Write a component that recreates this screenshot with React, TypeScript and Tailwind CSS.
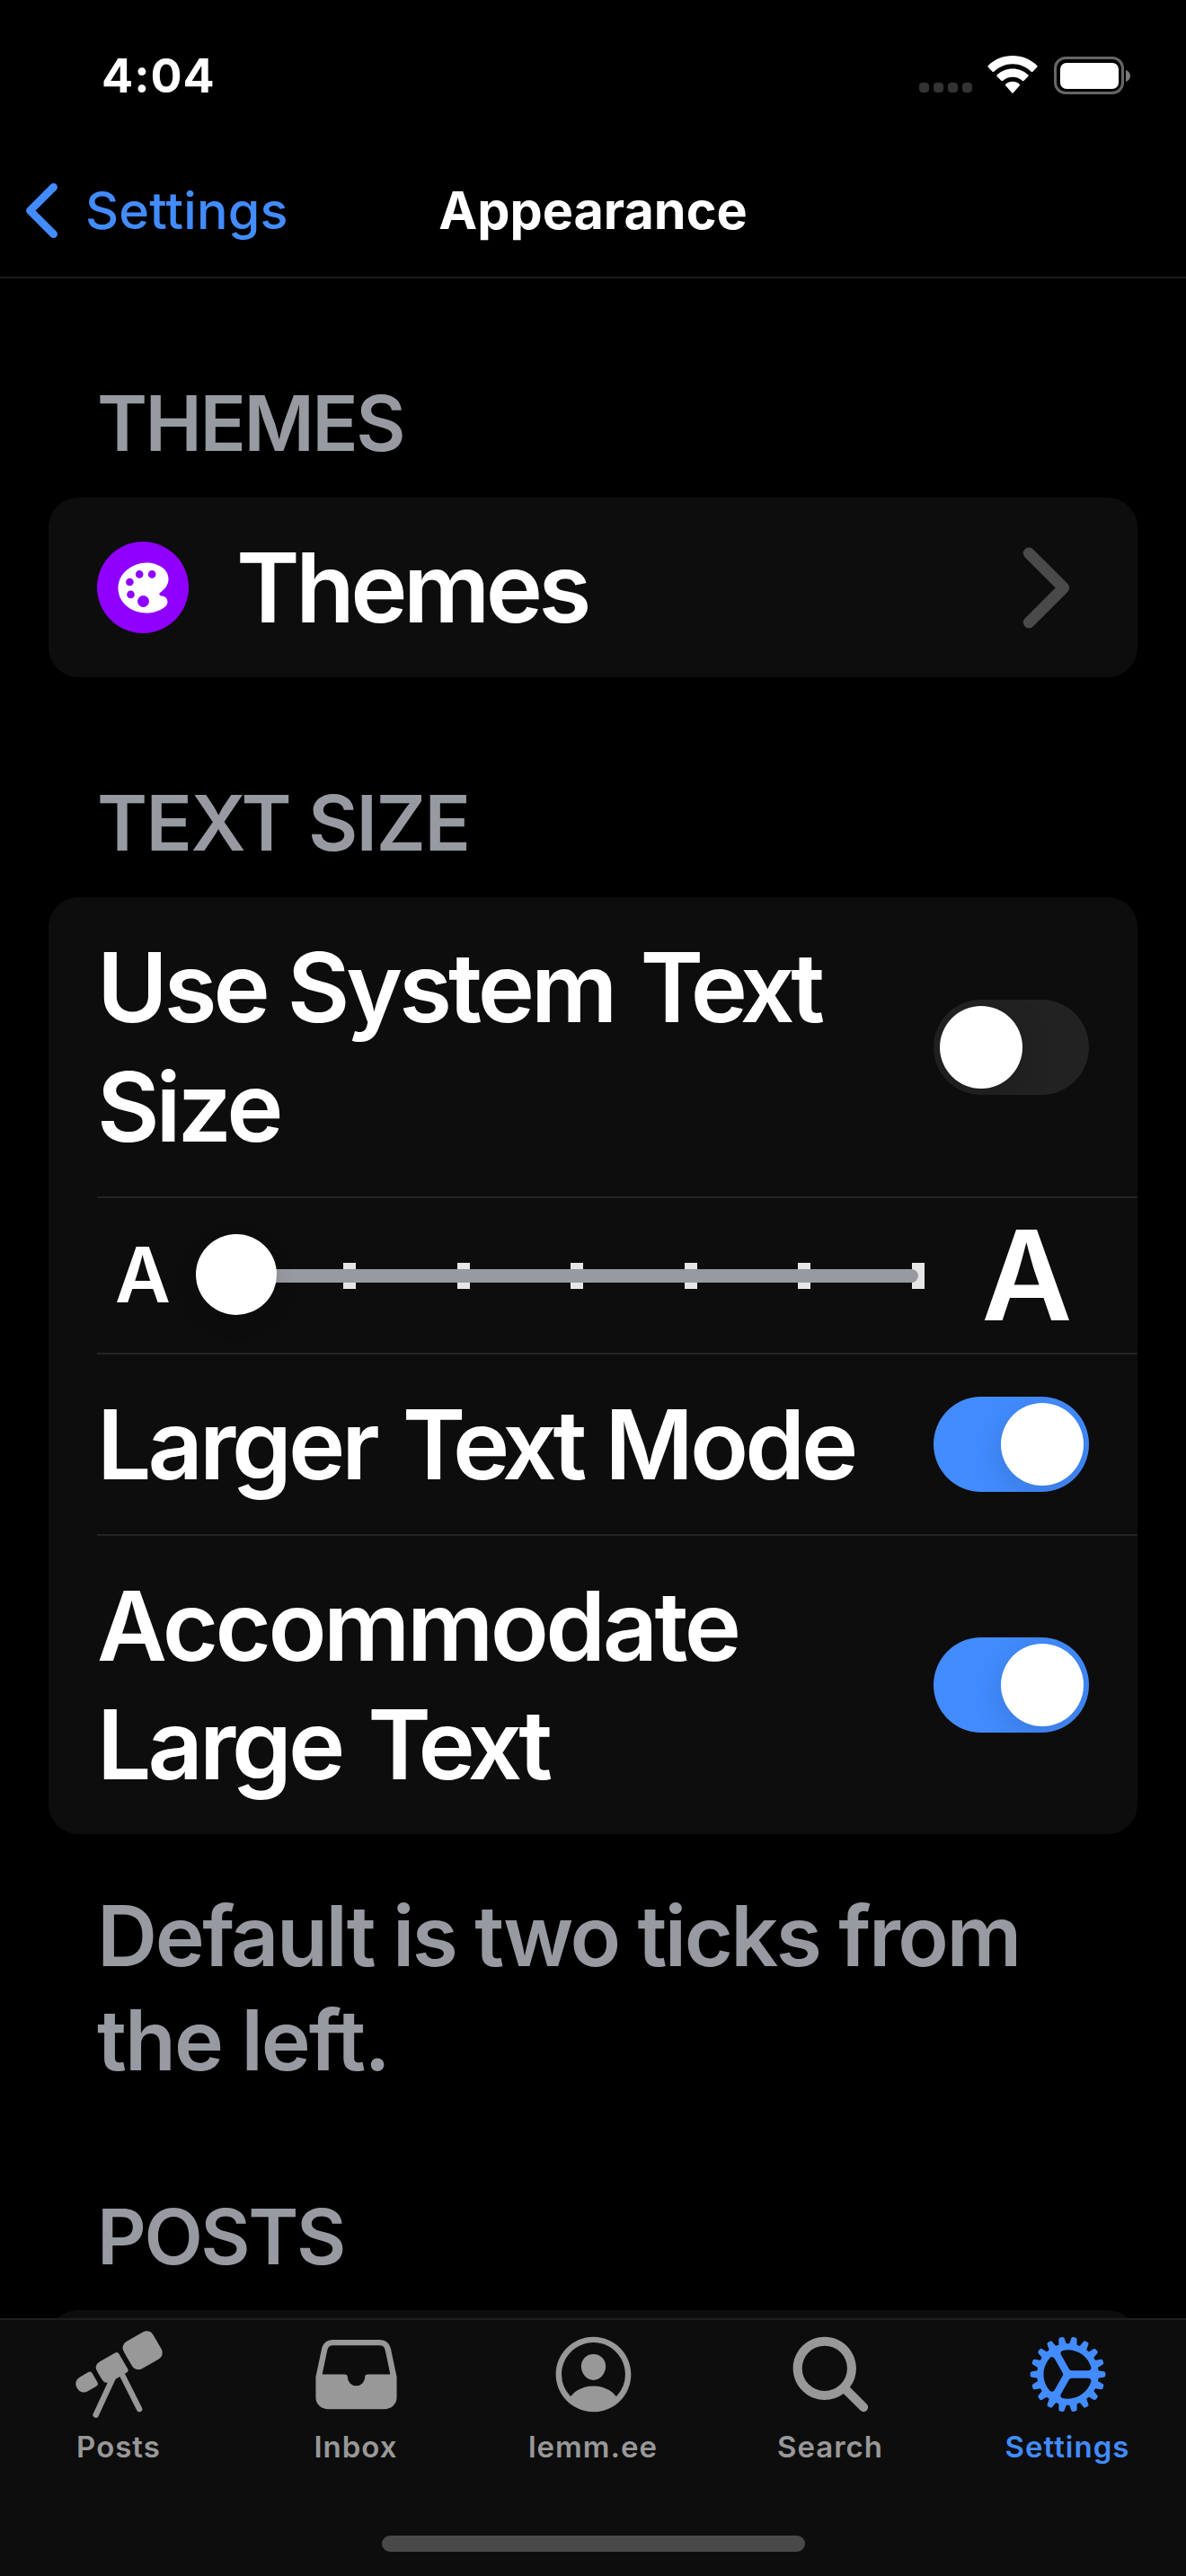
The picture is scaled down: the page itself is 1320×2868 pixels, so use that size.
import React from "react";
import {
  IoChevronBack,
  IoChevronForward,
  IoCog,
  IoColorPalette,
  IoFileTray,
  IoPersonCircleOutline,
  IoSearch,
  IoTelescope,
} from "react-icons/io5";

function StatusBar() {
  return (
    <div className="flex h-[160px] shrink-0 items-start justify-between pl-[113px] pr-[62px]">
      <div className="mt-[52px] text-[52px] leading-[65px] font-bold tracking-[1px]">4:04</div>
      <div className="mt-[62px] flex items-start">
        <div className="mt-[30px] flex gap-[5px]">
          {[0, 1, 2, 3].map((i) => (
            <div key={i} className="size-[11px] rounded-[4px] bg-[#333333]" />
          ))}
        </div>
        <svg className="ml-[17px] h-[42px] w-[56px]" viewBox="0 0 56 42" fill="#fff">
          <path d="M28 0c10.400 0 19.800 4 27 10.700 .7 .7 .7 1.600 0 2.300l-4.300 4.500c-.7 .7-1.500 .7-2.200 0C43 12.300 35.900 9.200 28 9.200S13 12.300 7.500 17.500c-.7 .7-1.500 .7-2.200 0L1 13c-.7-.7-.7-1.600 0-2.300C8.200 4 17.600 0 28 0z" />
          <path d="M28 14.400c6.600 0 12.500 2.500 17.100 6.600 .7 .7 .7 1.500 0 2.200l-4.400 4.500c-.6 .6-1.400 .6-2.100 0-2.800-2.500-6.500-4-10.600-4s-7.800 1.500-10.600 4c-.7 .6-1.500 .6-2.100 0l-4.400-4.500c-.7-.7-.7-1.500 0-2.200 4.600-4.100 10.500-6.600 17.100-6.600z" />
          <path d="M28 28.700c2.900 0 5.500 1 7.500 2.800 .7 .6 .7 1.500 .1 2.100l-6.500 7.500c-.7 .7-1.500 .7-2.200 0l-6.500-7.500c-.6-.6-.6-1.500 .1-2.100 2-1.800 4.600-2.800 7.500-2.800z" />
        </svg>
        <div className="ml-[18px] mt-px flex h-[42px] w-[78px] rounded-[13px] border-[3px] border-[#666666] p-[3.500px]">
          <div className="flex-1 rounded-[7px] bg-white" />
        </div>
        <svg className="ml-[2px] mt-[16px] h-[13px] w-[5px]" viewBox="0 0 5 13" fill="#7a7a7a">
          <path d="M0 0c3 1 5 3.600 5 6.500S3 12 0 13z" />
        </svg>
      </div>
    </div>
  );
}

function NavBar() {
  return (
    <div className="grid h-[150px] shrink-0 grid-cols-[1fr_auto_1fr] items-center border-b-2 border-[#1c1c1c] text-[57.500px] leading-[72px]">
      <div className="flex items-center text-[#428cff]">
        <IoChevronBack className="size-[93px]" />
        <span className="ml-[2px] font-medium tracking-[0.2px]">Settings</span>
      </div>
      <div className="font-bold tracking-[0px]">Appearance</div>
      <div />
    </div>
  );
}

function SectionTitle({ children, className }: { children: React.ReactNode; className: string }) {
  return (
    <h2 className={"ml-[108px] text-[85px] leading-[102px] font-semibold text-[#989aa2] " + className}>
      {children}
    </h2>
  );
}

function Toggle({ on = false }: { on?: boolean }) {
  return (
    <div
      className={
        "flex h-[106px] w-[173px] shrink-0 items-center overflow-hidden rounded-full px-[6.500px] " +
        (on ? "justify-end bg-[#428cff]" : "justify-start bg-[#222222]")
      }
    >
      <div className="size-[92px] rounded-full bg-white shadow-[0_9px_36px_rgba(0,0,0,0.150)]" />
    </div>
  );
}

function ToggleRow({ label, on, className }: { label: React.ReactNode; on?: boolean; className: string }) {
  return (
    <div className={"ml-[54px] flex items-center justify-between pr-[54px] " + className}>
      <div className="text-[107px] leading-[132.500px] font-semibold tracking-[-4px] whitespace-nowrap">{label}</div>
      <Toggle on={on} />
    </div>
  );
}

/* The word "Text" is set tighter than its neighbours. */
function TightText() {
  return <span className="mr-[3px] ml-[6px] tracking-[-6px]">Text</span>;
}

function TextSizeSlider() {
  return (
    <div className="ml-[54px] flex h-[174px] items-center border-b-2 border-[#242424]">
      <span className="w-[100px] pl-[20px] text-[85px] leading-[100px] font-semibold">A</span>
      <div className="relative ml-[47.500px] h-[90px] w-[773px]">
        <div className="absolute inset-x-0 top-[31px] flex justify-between">
          {[0, 1, 2, 3, 4, 5, 6].map((i) => (
            <div key={i} className="h-[29px] w-[14px] bg-[#e6e6e6]" />
          ))}
        </div>
        <div className="absolute left-[7px] top-[38px] h-[15px] w-[759px] rounded-full bg-[#989aa2]" />
        <div className="absolute left-[-38px] top-[-1px] size-[90px] rounded-full bg-white shadow-[0_9px_24px_rgba(0,0,0,0.120)]" />
      </div>
      <span className="ml-[64px] text-[138.500px] leading-[150px] font-semibold">A</span>
    </div>
  );
}

const tabs = [
  { label: "Posts", Icon: IoTelescope },
  { label: "Inbox", Icon: IoFileTray },
  { label: "lemm.ee", Icon: IoPersonCircleOutline },
  { label: "Search", Icon: IoSearch },
  { label: "Settings", Icon: IoCog, active: true },
];

function TabBar() {
  return (
    <nav className="flex h-[287px] shrink-0 flex-col items-center border-t-2 border-[#1e1e1e] bg-[#0d0d0d]">
      <div className="grid w-full grid-cols-5 pt-[9px]">
        {tabs.map(({ label, Icon, active }) => (
          <div
            key={label}
            className={"flex flex-col items-center " + (active ? "text-[#428cff]" : "text-[#989898]")}
          >
            <Icon className="size-[103px]" />
            <span className="mt-[9px] text-[33px] leading-[40px] font-semibold tracking-[1px]">{label}</span>
          </div>
        ))}
      </div>
      <div className="mt-auto mb-[27px] h-[18px] w-[471px] rounded-full bg-[#494949]" />
    </nav>
  );
}

export default function App() {
  return (
    <div className="flex h-[2868px] w-[1320px] flex-col overflow-hidden bg-black font-['Inter',sans-serif] text-white">
      <StatusBar />
      <NavBar />
      <main className="min-h-0 flex-1 overflow-hidden">
        <SectionTitle className="mt-[111px] tracking-[-2.500px]">THEMES</SectionTitle>
        <section className="mx-[54px] mt-[31px] flex h-[200px] items-center rounded-[33px] bg-[#0d0d0d] pl-[54px]">
          <div className="flex size-[102px] items-center justify-center rounded-full bg-[#8f00ff]">
            <IoColorPalette className="size-[69px] text-white" />
          </div>
          <div className="ml-[53px] text-[107px] leading-[132px] font-semibold tracking-[-4.500px]">Themes</div>
          <IoChevronForward className="mr-[33px] ml-auto size-[137px] text-[#4a4a4a]" />
        </section>

        <SectionTitle className="mt-[112px] tracking-[-1.600px]">TEXT SIZE</SectionTitle>
        <section className="mx-[54px] mt-[31px] rounded-[33px] bg-[#0d0d0d]">
          <ToggleRow
            className="h-[335px] border-b-2 border-[#242424]"
            label={<>Use System <TightText /><br />Size</>}
          />
          <TextSizeSlider />
          <ToggleRow
            className="h-[202px] border-b-2 border-[#242424]"
            on
            label={<>Larger <TightText /> Mode</>}
          />
          <ToggleRow
            className="h-[332px]"
            on
            label={<><span className="tracking-[-3.500px]">Accommodate</span><br />Large <TightText /></>}
          />
        </section>
        <p className="mt-[56px] ml-[108px] text-[93px] leading-[115.500px] font-semibold tracking-[-2.500px] text-[#989aa2]">
          Default is two ticks from
          <br />
          <span className="tracking-[-2px]">the left.</span>
        </p>

        <SectionTitle className="mt-[111px] tracking-[-2.400px]">POSTS</SectionTitle>
        <section className="mx-[54px] mt-[30px] h-[200px] rounded-[33px] bg-[#0d0d0d]" />
      </main>
      <TabBar />
    </div>
  );
}
